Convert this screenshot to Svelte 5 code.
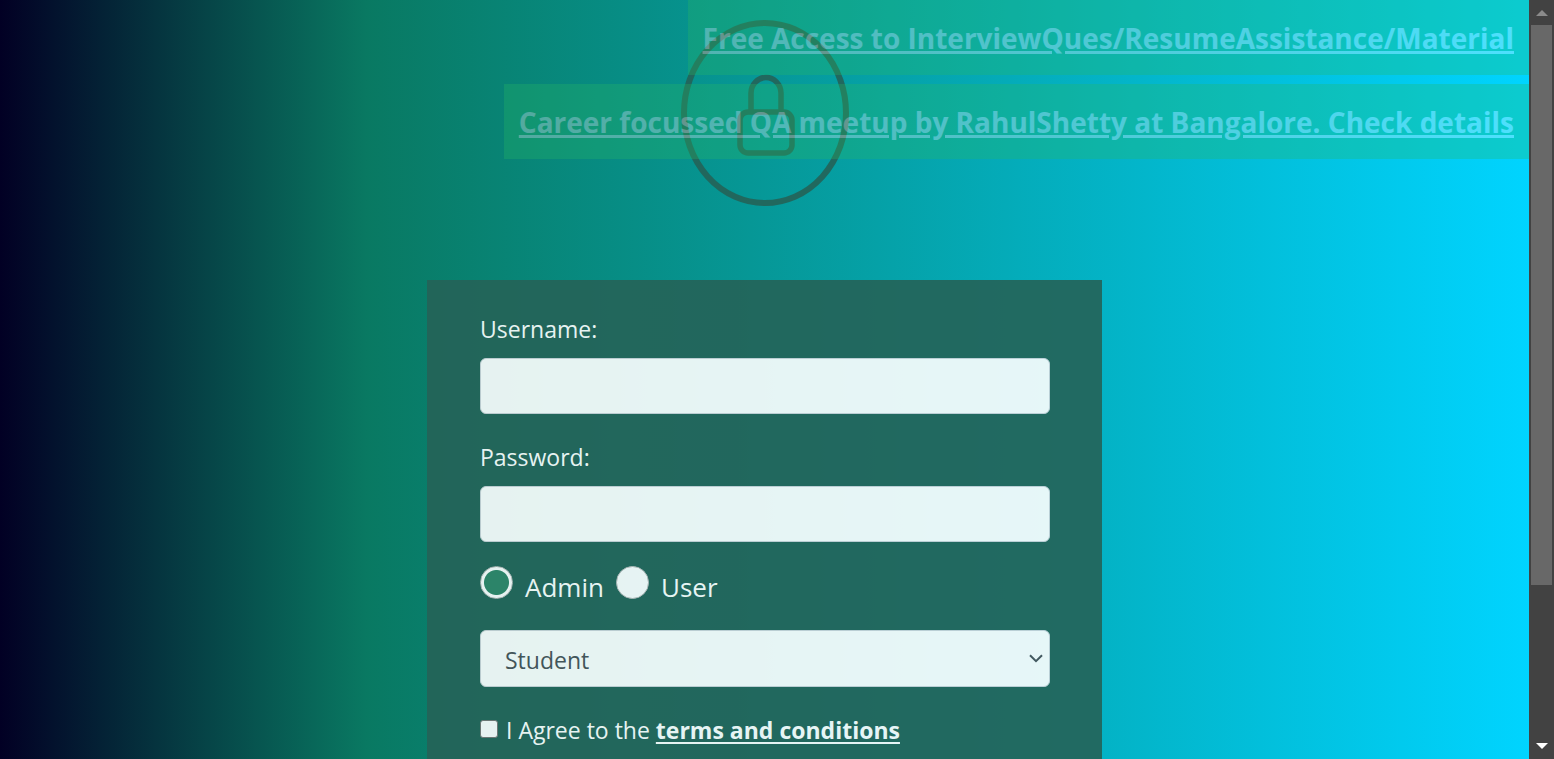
<script>
  let role = $state('admin');
  let occupation = $state('stud');
  const notices = [
    'Free Access to InterviewQues/ResumeAssistance/Material',
    'Career focussed QA meetup by RahulShetty at Bangalore. Check details'
  ];
</script>

<div class="window">
  <main>
    <nav class="notices" aria-label="Announcements">
      {#each notices as notice}
        <a href="#notice">{notice}</a>
      {/each}
    </nav>

    <div class="emblem">
      <svg width="168" height="186" viewBox="0 0 168 186" fill="none" stroke="currentColor" stroke-width="6" aria-hidden="true">
        <ellipse cx="84" cy="93" rx="81" ry="90" />
        <path d="M70 91V73A15 15.5 0 0 1 100 73V91" stroke-width="5.5" />
        <rect x="59" y="92" width="52" height="41" rx="8" stroke-width="5.5" />
      </svg>
    </div>

    <form>
      <div class="field">
        <label for="username">Username:</label>
        <input class="control" id="username" type="text" />
      </div>
      <div class="field">
        <label for="password">Password:</label>
        <input class="control" id="password" type="password" />
      </div>
      <div class="roles">
        <label><input type="radio" name="role" value="admin" bind:group={role} /><span>Admin</span></label>
        <label><input type="radio" name="role" value="user" bind:group={role} /><span>User</span></label>
      </div>
      <div class="select">
        <select class="control" aria-label="Occupation" bind:value={occupation}>
          <option value="stud">Student</option>
          <option value="teach">Teacher</option>
          <option value="consult">Consultant</option>
        </select>
        <svg width="14" height="9" viewBox="0 0 14 9" fill="none" stroke="#495057" stroke-width="2" aria-hidden="true">
          <path d="M1 1.2L7 7.2L13 1.2" />
        </svg>
      </div>
      <div class="terms">
        <input id="terms" type="checkbox" />
        <label for="terms">I Agree to the <a href="#terms">terms and conditions</a></label>
      </div>
    </form>
  </main>

  <div class="scrollbar" aria-hidden="true">
    <svg width="12" height="6" viewBox="0 0 12 6"><path d="M0 6L6 0L12 6Z" fill="#8b8b8b" /></svg>
    <div class="track"><div class="thumb"></div></div>
    <svg width="12" height="6" viewBox="0 0 12 6"><path d="M0 0L6 6L12 0Z" fill="#fff" /></svg>
  </div>
</div>

<style>
  :global(body) {
    margin: 0;
  }
  .window {
    display: flex;
    height: 100vh;
    overflow: hidden;
    font-family: "Open Sans", "Noto Sans", sans-serif;
    font-size: 23px;
    line-height: 36px;
  }
  main {
    position: relative;
    flex: 1;
    display: flex;
    flex-direction: column;
    align-items: center;
    overflow: hidden;
    background: linear-gradient(90deg, #020024 0%, #097962 24%, #00d4ff 100%);
  }
  .notices {
    position: absolute;
    z-index: 1;
    top: 0;
    right: 0;
    display: flex;
    flex-direction: column;
    align-items: flex-end;
    gap: 9px;
    opacity: 0.3;
  }
  .notices a {
    padding: 16px 15px 14px;
    background: #28b964;
    color: #fff;
    font-size: 28px;
    font-weight: 700;
    line-height: 45px;
    text-decoration-thickness: 3px;
    text-underline-offset: 2px;
    white-space: nowrap;
  }
  .emblem {
    flex: none;
    height: 186px;
    padding: 20px 0 74px;
    color: #256358;
    opacity: 0.9;
  }
  .emblem svg {
    display: block;
  }
  form {
    box-sizing: border-box;
    flex: 1 0 auto;
    width: 100%;
    max-width: 675px;
    padding: 31px 52px 31px 53px;
    background: #256358;
    color: #fff;
    opacity: 0.9;
  }
  .field {
    margin-bottom: 25px;
  }
  .field label {
    display: block;
    margin-bottom: 11px;
  }
  .control {
    display: block;
    box-sizing: border-box;
    width: 100%;
    height: 56px;
    padding: 0 24px;
    border: 1px solid #ced4da;
    border-radius: 6px;
    background: #fff;
    color: #495057;
    font: inherit;
    appearance: none;
  }
  .roles {
    display: flex;
    gap: 12px;
    margin: -1px 0 26px;
    font-size: 26px;
    line-height: 38px;
  }
  .roles label {
    display: flex;
    gap: 12px;
    height: 38px;
  }
  .roles span {
    padding-top: 2px;
  }
  .roles input {
    box-sizing: border-box;
    width: 33px;
    height: 33px;
    margin: 0;
    border: 1px solid #bbb;
    border-radius: 50%;
    background: #fff;
    appearance: none;
  }
  .roles input:checked {
    background: radial-gradient(circle, #308568 12px, #fff 13px);
  }
  .select {
    position: relative;
    margin-bottom: 25px;
  }
  .select .control {
    height: 57px;
    padding-top: 3px;
  }
  .select svg {
    position: absolute;
    top: 24px;
    right: 7px;
  }
  .terms {
    display: flex;
    align-items: flex-start;
    gap: 8px;
  }
  .terms input {
    box-sizing: border-box;
    width: 18px;
    height: 18px;
    margin: 8px 0 0;
    border: 1px solid #767676;
    border-radius: 3px;
    background: #fff;
    appearance: none;
  }
  .terms input:checked {
    background: #256358;
  }
  .terms a {
    color: #fff;
    font-weight: 700;
    text-decoration-thickness: 2px;
    text-underline-offset: 3px;
  }
  .scrollbar {
    box-sizing: border-box;
    flex: none;
    display: flex;
    flex-direction: column;
    align-items: center;
    gap: 9px;
    width: 25px;
    padding: 10px 0;
    background: #424242;
  }
  .track {
    flex: 1;
    width: 21px;
  }
  .thumb {
    height: 79%;
    background: #686868;
  }
</style>
